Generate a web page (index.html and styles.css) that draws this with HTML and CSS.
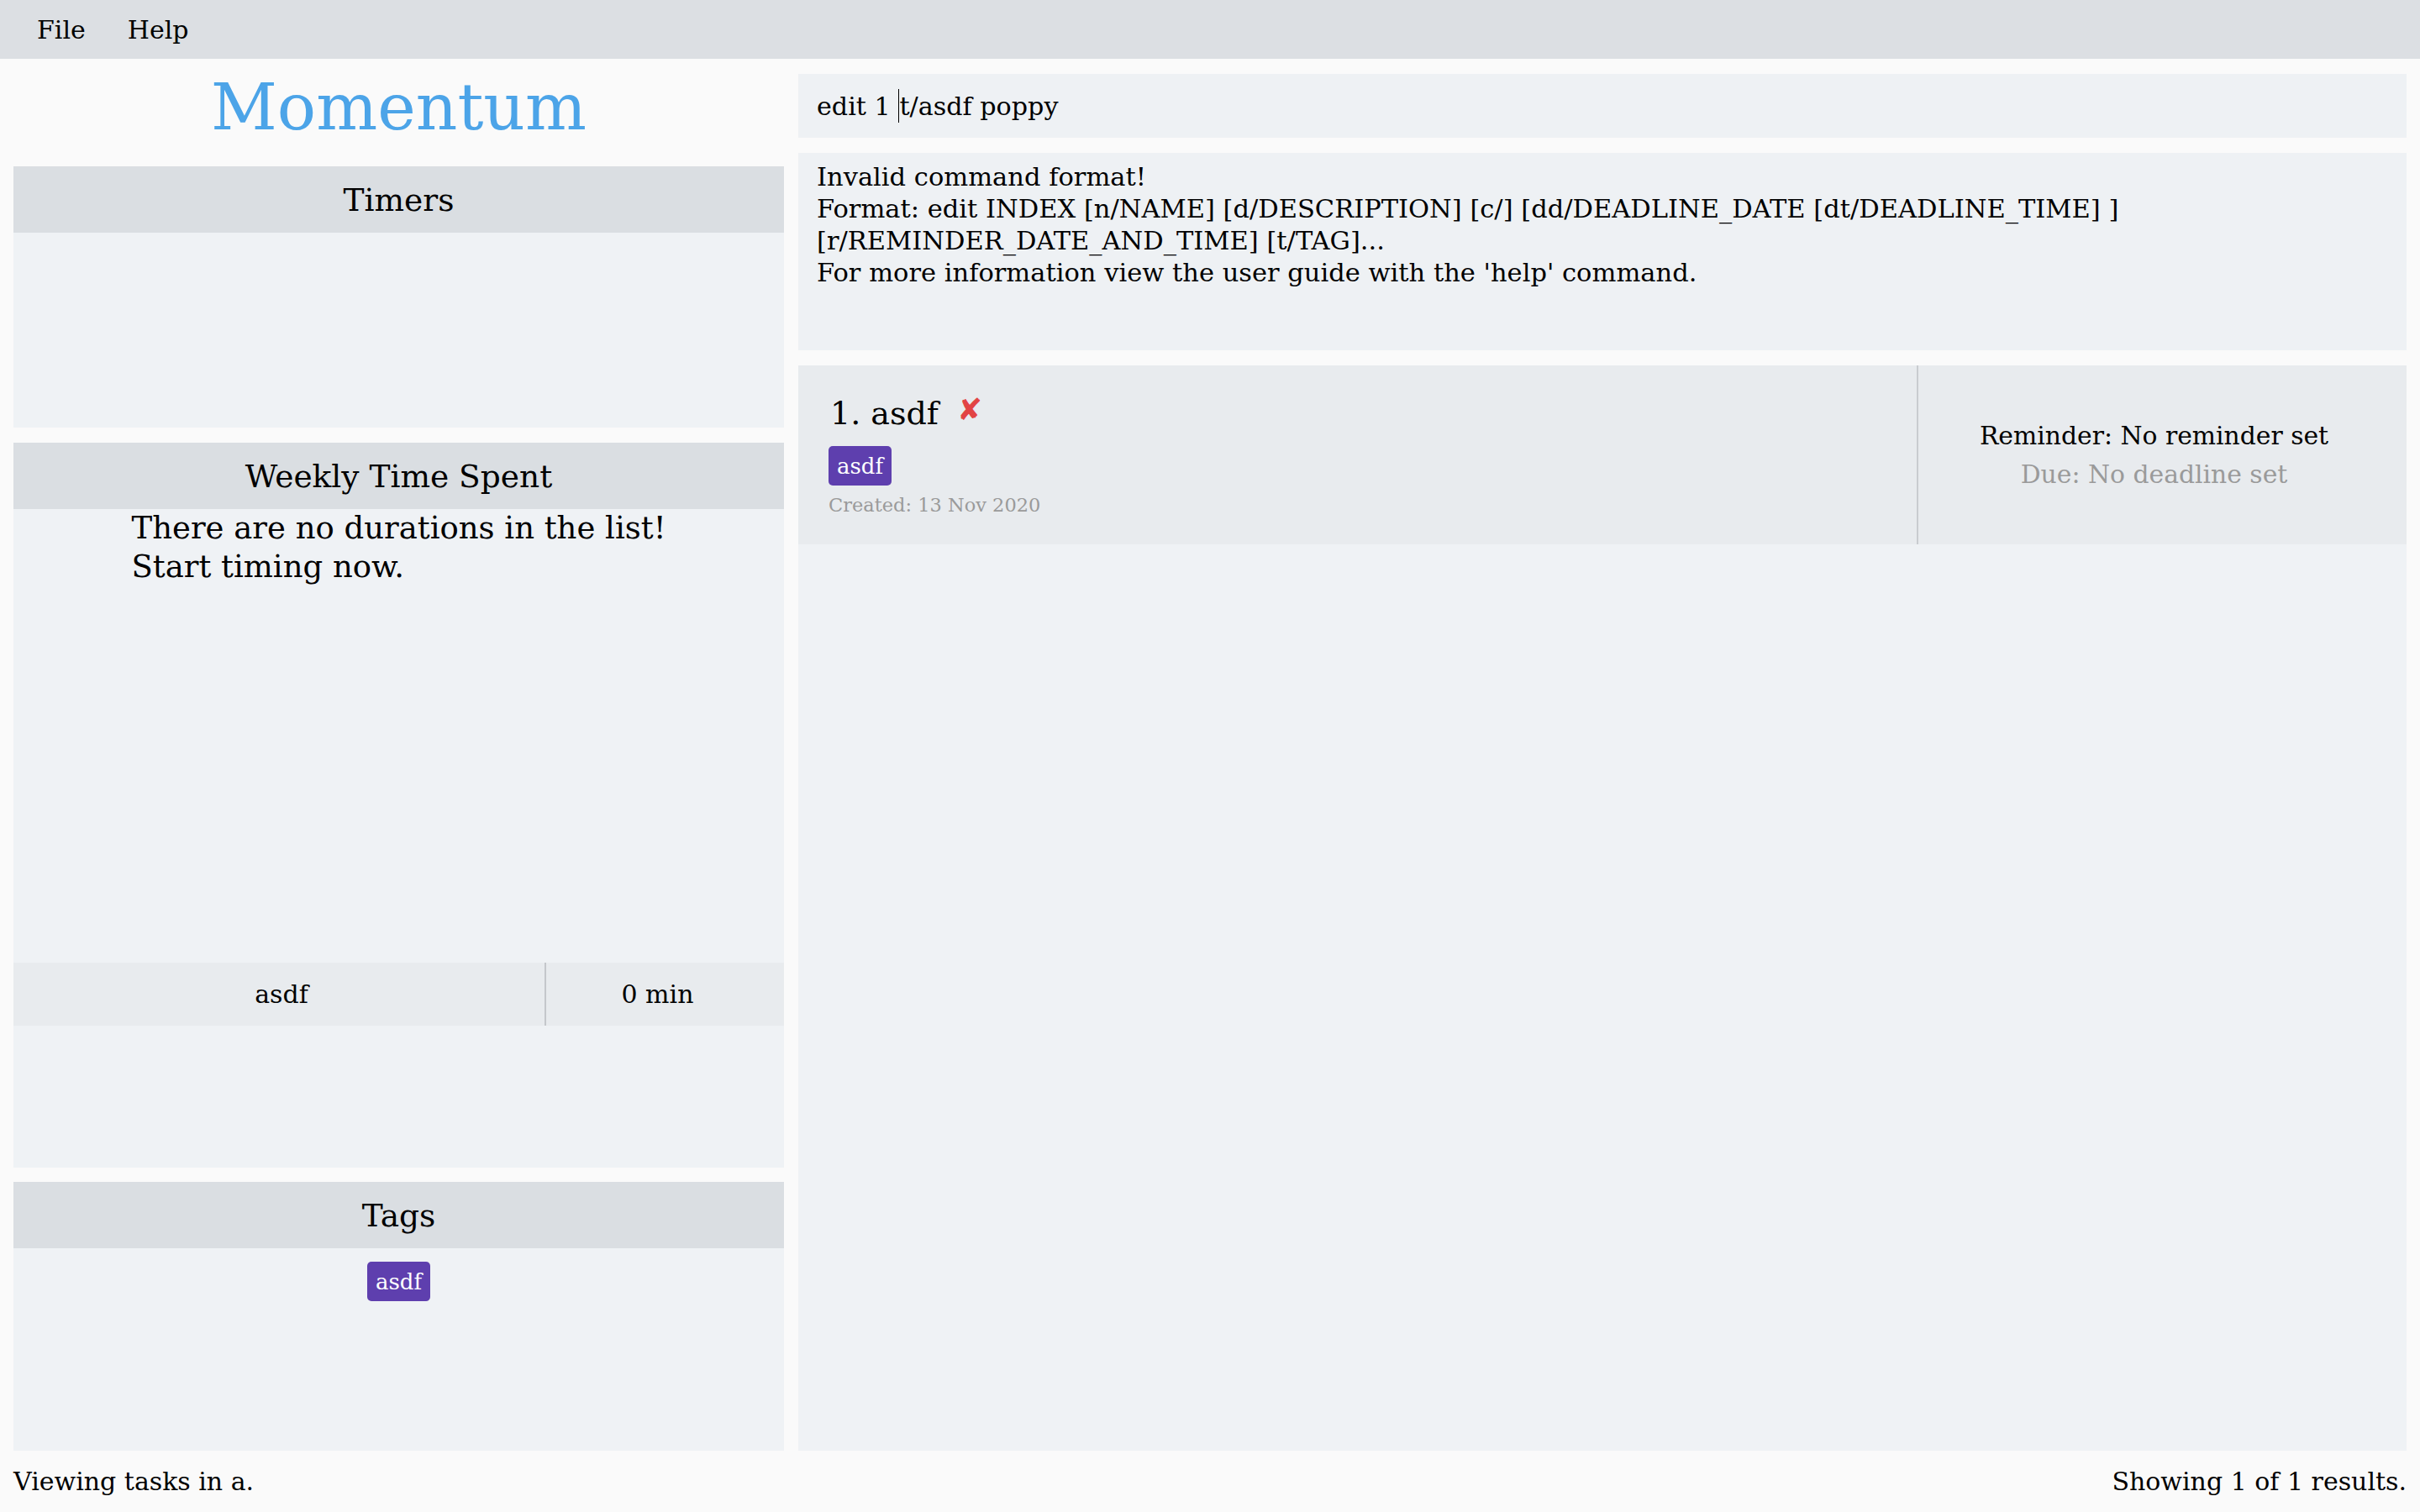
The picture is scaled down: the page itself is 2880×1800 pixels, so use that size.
FILE: index.html
```html
<!DOCTYPE html>
<html>
<head>
<meta charset="utf-8">
<title>Momentum</title>
<link rel="stylesheet" href="styles.css">
</head>
<body>
<div class="app">
  <div class="menubar">
    <span class="menu-item">File</span>
    <span class="menu-item">Help</span>
  </div>
  <div class="main">
    <div class="left">
      <div class="title">Momentum</div>
      <div class="panel timers">
        <div class="panel-head">Timers</div>
        <div class="panel-body"></div>
      </div>
      <div class="panel weekly">
        <div class="panel-head">Weekly Time Spent</div>
        <div class="panel-body">
          <div class="chart">
            <div class="empty-msg">There are no durations in the list!<br>Start timing now.</div>
          </div>
          <div class="dur-row">
            <div class="dur-name">asdf</div>
            <div class="dur-time">0 min</div>
          </div>
        </div>
      </div>
      <div class="panel tags">
        <div class="panel-head">Tags</div>
        <div class="panel-body tags-body">
          <span class="chip">asdf</span>
        </div>
      </div>
    </div>
    <div class="right">
      <div class="command">edit 1 <span class="caret"></span>t/asdf poppy</div>
      <div class="result">Invalid command format!<br>Format: edit INDEX [n/NAME] [d/DESCRIPTION] [c/] [dd/DEADLINE_DATE [dt/DEADLINE_TIME] ]<br>[r/REMINDER_DATE_AND_TIME] [t/TAG]...<br>For more information view the user guide with the 'help' command.</div>
      <div class="list">
        <div class="card">
          <div class="card-main">
            <div class="task-name">1. asdf <span class="cross">✘</span></div>
            <div class="task-tags"><span class="chip">asdf</span></div>
            <div class="created">Created: 13 Nov 2020</div>
          </div>
          <div class="card-side">
            <div class="reminder">Reminder: No reminder set</div>
            <div class="due">Due: No deadline set</div>
          </div>
        </div>
      </div>
    </div>
  </div>
  <div class="status">
    <span>Viewing tasks in a.</span>
    <span>Showing 1 of 1 results.</span>
  </div>
</div>
</body>
</html>
```

FILE: styles.css
```css
* { box-sizing: border-box; }
html, body { margin: 0; padding: 0; }
body {
  width: 2880px;
  height: 1800px;
  background: #fafafa;
  font-family: "DejaVu Serif", "Liberation Serif", serif;
  color: #000;
  overflow: hidden;
}
.app { display: flex; flex-direction: column; height: 1800px; }
.menubar {
  height: 70px;
  flex: none;
  background: #dcdfe3;
  display: flex;
  align-items: center;
  padding-left: 44px;
  gap: 50px;
  font-size: 30px;
}
.main { flex: 1; display: flex; gap: 17px; padding: 0 16px; min-height: 0; }
.left { width: 917px; flex: none; display: flex; flex-direction: column; }
.title {
  height: 128px;
  flex: none;
  display: flex;
  align-items: center;
  justify-content: center;
  padding-bottom: 14px;
  color: #4ca4e8;
  font-size: 77px;
}
.panel { display: flex; flex-direction: column; background: #eff2f5; }
.panel-head {
  height: 79px;
  flex: none;
  background: #dadee2;
  display: flex;
  align-items: center;
  justify-content: center;
  font-size: 37.5px;
}
.panel-body { flex: 1; }
.timers { height: 311px; flex: none; }
.weekly { height: 863px; flex: none; margin-top: 18px; }
.tags { flex: 1; margin-top: 17px; }
.chart { height: 540px; display: flex; justify-content: center; align-items: flex-start; }
.empty-msg { font-size: 37px; line-height: 46px; text-align: left; }
.dur-row { height: 75px; display: flex; background: #e8ebee; font-size: 30px; }
.dur-name { width: 634px; display: flex; align-items: center; justify-content: center; padding-left: 6px; border-right: 2px solid #c4c7cb; }
.dur-time { flex: 1; display: flex; align-items: center; justify-content: center; padding-right: 18px; }
.tags-body { display: flex; justify-content: center; align-items: flex-start; padding-top: 16px; }
.chip {
  display: inline-flex;
  align-items: center;
  justify-content: center;
  height: 47px;
  padding: 0 10px;
  background: #5e3fae;
  color: #fff;
  border-radius: 5px;
  font-size: 26px;
}
.right { flex: 1; display: flex; flex-direction: column; padding-top: 18px; gap: 18px; min-width: 0; }
.command {
  height: 76px;
  flex: none;
  background: #eef1f4;
  display: flex;
  align-items: center;
  padding-left: 22px;
  font-size: 30.2px;
  white-space: pre;
}
.caret { display: inline-block; width: 0; height: 40px; border-left: 1px solid #000; }
.result {
  height: 235px;
  flex: none;
  background: #eef1f4;
  padding: 10px 22px;
  font-size: 30.5px;
  line-height: 38px;
}
.list { flex: 1; background: #eff2f5; }
.card { height: 213px; background: #e8ebee; display: flex; }
.card-main { flex: 1; padding: 33px 36px 0 36px; }
.task-name { font-size: 38px; line-height: 48px; padding-left: 2px; }
.cross { color: #e24444; font-size: 36px; line-height: 30px; margin-left: 10px; vertical-align: 5px; }
.task-tags { margin-top: 15px; }
.created { margin-top: 9px; font-size: 22.5px; line-height: 28px; color: #9a9a9a; }
.card-side {
  width: 583px;
  flex: none;
  border-left: 2px solid #c9ccd0;
  display: flex;
  flex-direction: column;
  align-items: center;
  justify-content: center;
  gap: 8px;
  padding-right: 20px;
  font-size: 29.8px;
  line-height: 38px;
}
.due { color: #9a9a9a; }
.status {
  height: 73px;
  flex: none;
  display: flex;
  justify-content: space-between;
  align-items: center;
  padding: 0 16px;
  font-size: 30px;
}
```
